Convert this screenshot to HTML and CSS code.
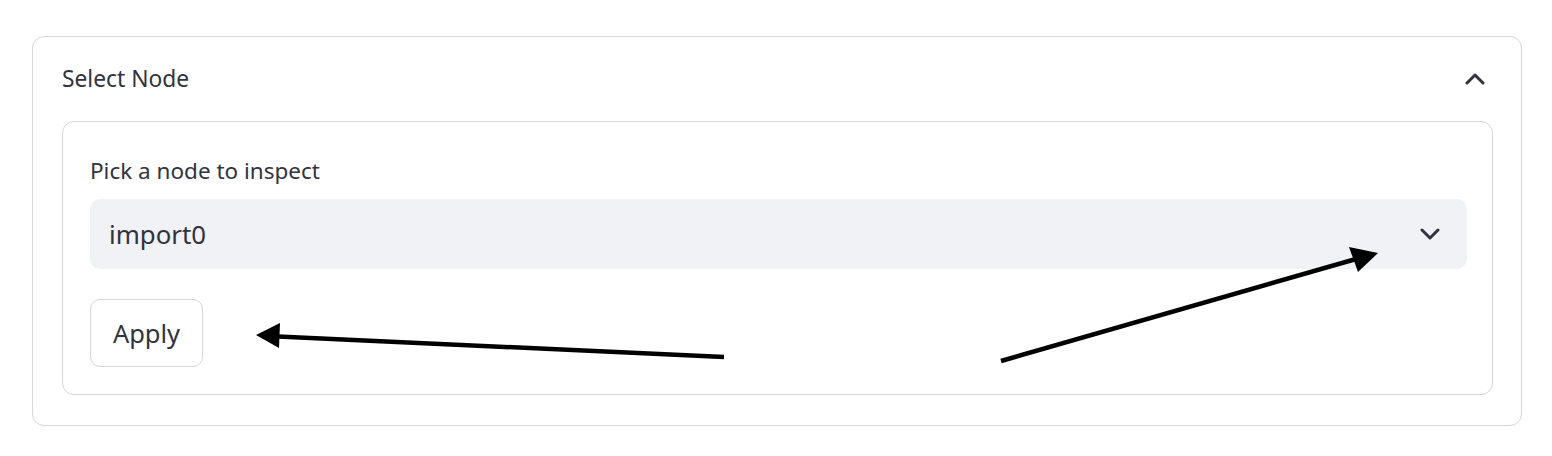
FILE: index.html
```html
<!DOCTYPE html>
<html lang="en">
<head>
<meta charset="utf-8">
<title>Select Node</title>
<link rel="stylesheet" href="styles.css">
</head>
<body>
<div class="page">
  <section class="expander">
    <header class="expander-header">
      <span class="expander-title">Select Node</span>
      <svg class="chevron" width="20" height="12" viewBox="0 0 20 12"><path d="M2 10 L10 2 L18 10" fill="none" stroke="#31333f" stroke-width="3" stroke-linecap="round" stroke-linejoin="round"/></svg>
    </header>
    <div class="expander-body">
      <form class="form">
        <label class="field-label">Pick a node to inspect</label>
        <div class="select">
          <span class="select-value">import0</span>
          <svg class="chevron" width="20" height="12" viewBox="0 0 20 12"><path d="M2 2 L10 10 L18 2" fill="none" stroke="#31333f" stroke-width="3" stroke-linecap="round" stroke-linejoin="round"/></svg>
        </div>
        <div class="actions">
          <button type="button" class="btn">Apply</button>
        </div>
      </form>
    </div>
  </section>
  <svg class="annotations" width="1552" height="456" viewBox="0 0 1552 456">
    <line x1="724" y1="357" x2="278" y2="336.5" stroke="#000" stroke-width="4.5"/>
    <polygon points="256,335 280,323 279,348" fill="#000"/>
    <line x1="1001" y1="361" x2="1356" y2="259" stroke="#000" stroke-width="4.5"/>
    <polygon points="1378,253 1349,247 1358,272" fill="#000"/>
  </svg>
</div>
</body>
</html>
```
FILE: styles.css
```css
* { box-sizing: border-box; }
html, body { margin: 0; padding: 0; background: #fff; }
body {
  font-family: "Noto Sans", "Lato", sans-serif;
  color: #31333f;
  width: 1552px;
  height: 456px;
  overflow: hidden;
}
.page {
  position: relative;
  padding: 36px 30px 0 32px;
}
.expander {
  border: 1px solid #d6d6d9;
  border-radius: 12px;
  height: 390px;
}
.expander-header {
  height: 84px;
  display: flex;
  align-items: center;
  justify-content: space-between;
  padding: 0 36px 0 29px;
}
.expander-title {
  font-size: 22.8px;
  line-height: 1;
}
.expander-body {
  padding: 0 28px 29px 29px;
}
.form {
  border: 1px solid #d6d6d9;
  border-radius: 12px;
  padding: 27px 25px 27px 27px;
}
.field-label {
  display: block;
  font-size: 22.5px;
  line-height: 44px;
  margin-bottom: 6px;
}
.select {
  height: 70px;
  background: #f0f2f6;
  border-radius: 10px;
  display: flex;
  align-items: center;
  justify-content: space-between;
  padding: 0 27px 0 19px;
}
.select-value {
  font-size: 25.8px;
}
.actions {
  margin-top: 30px;
  display: flex;
}
.btn {
  font-family: inherit;
  color: #31333f;
  font-size: 25.5px;
  width: 113px;
  height: 68px;
  background: #fff;
  border: 1px solid #d6d6d9;
  border-radius: 10px;
  padding: 0;
}
.annotations {
  position: absolute;
  left: 0;
  top: 0;
  pointer-events: none;
}
```
